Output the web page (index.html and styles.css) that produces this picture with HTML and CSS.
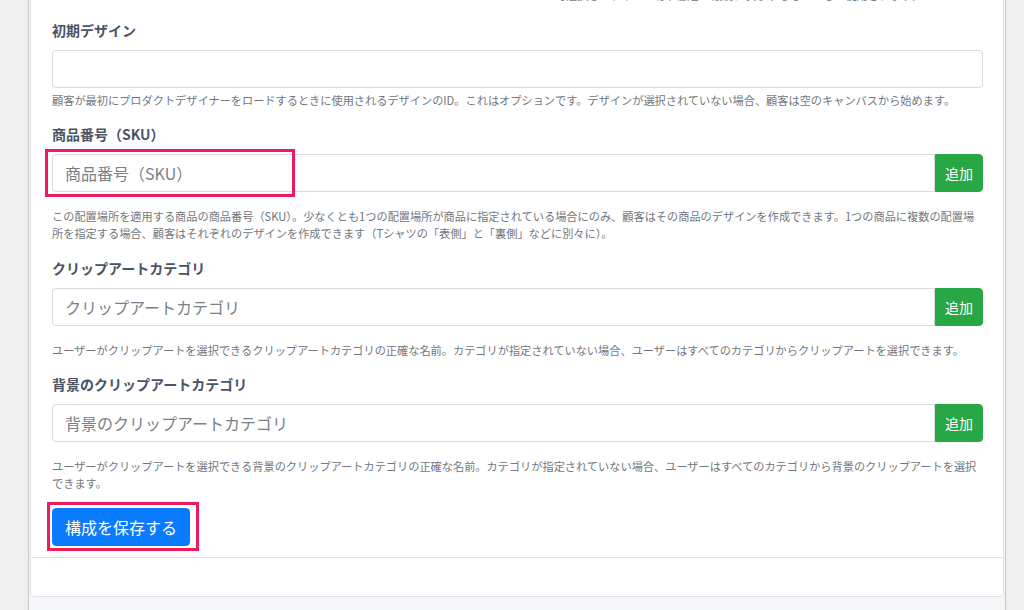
FILE: index.html
```html
<!DOCTYPE html>
<html lang="ja">
<head>
    <meta charset="UTF-8">
    <meta name="viewport" content="width=device-width, initial-scale=1.0">
    <title>構成</title>
    <link rel="stylesheet" href="styles.css">
</head>
<body>
    <div class="frame">
        <div class="card">
            <div class="card-body">
                <!-- tail of the previous row, scrolled off the top -->
                <div class="form-row">
                    <div class="col"></div>
                    <div class="col">
                        <small class="help">ここで選択したデザインは、顧客が最初に表示するものとして使用されます。</small>
                    </div>
                </div>

                <div class="form-group">
                    <label for="initialDesign">初期デザイン</label>
                    <input type="text" id="initialDesign" class="form-control">
                    <small class="help">顧客が最初にプロダクトデザイナーをロードするときに使用されるデザインのID。これはオプションです。デザインが選択されていない場合、顧客は空のキャンバスから始めます。</small>
                </div>

                <div class="form-group">
                    <label for="sku">商品番号（SKU）</label>
                    <div class="input-group">
                        <input type="text" id="sku" class="form-control" placeholder="商品番号（SKU）">
                        <button type="button" class="btn-add">追加</button>
                        <span class="mark mark-input"></span>
                    </div>
                    <small class="help">この配置場所を適用する商品の商品番号（SKU）。少なくとも1つの配置場所が商品に指定されている場合にのみ、顧客はその商品のデザインを作成できます。1つの商品に複数の配置場所を指定する場合、顧客はそれぞれのデザインを作成できます（Tシャツの「表側」と「裏側」などに別々に）。</small>
                </div>

                <div class="form-group">
                    <label for="clipart">クリップアートカテゴリ</label>
                    <div class="input-group">
                        <input type="text" id="clipart" class="form-control" placeholder="クリップアートカテゴリ">
                        <button type="button" class="btn-add">追加</button>
                    </div>
                    <small class="help">ユーザーがクリップアートを選択できるクリップアートカテゴリの正確な名前。カテゴリが指定されていない場合、ユーザーはすべてのカテゴリからクリップアートを選択できます。</small>
                </div>

                <div class="form-group">
                    <label for="bgClipart">背景のクリップアートカテゴリ</label>
                    <div class="input-group">
                        <input type="text" id="bgClipart" class="form-control" placeholder="背景のクリップアートカテゴリ">
                        <button type="button" class="btn-add">追加</button>
                    </div>
                    <small class="help">ユーザーがクリップアートを選択できる背景のクリップアートカテゴリの正確な名前。カテゴリが指定されていない場合、ユーザーはすべてのカテゴリから背景のクリップアートを選択できます。</small>
                </div>

                <div class="save-row">
                    <span class="save-wrap">
                        <button type="submit" class="btn-save">構成を保存する</button>
                        <span class="mark mark-save"></span>
                    </span>
                </div>
            </div>
            <div class="card-footer"></div>
        </div>
    </div>
</body>
</html>
```

FILE: styles.css
```css
html, body {
    margin: 0;
    padding: 0;
}
body {
    font-family: "Noto Sans CJK JP", "Noto Sans", sans-serif;
    background-color: #efefef;
    color: #4a5466;
}
.frame {
    margin: -46px 0 0 28px;
    width: 978px;
    box-sizing: border-box;
    border-left: 1px solid #c6c6c6;
    border-right: 1px solid #c6c6c6;
    background: #f6f7f9;
    padding: 0 1px 60px;
}
.card {
    background: #fff;
    border: 1px solid #dfe3e7;
    border-radius: 4px;
}
.card-body {
    padding: 20px 20px 11px 21px;
    border-bottom: 1px solid #dfe3e7;
}
.card-footer {
    height: 38px;
}
.form-row {
    display: grid;
    grid-template-columns: 1fr 1fr;
    column-gap: 30px;
    padding-top: 8px;
    margin-bottom: 15.5px;
}
.form-group {
    margin-bottom: 15.5px;
}
.form-group label {
    display: block;
    font-size: 14px;
    font-weight: 700;
    line-height: 20px;
    margin-bottom: 10px;
    color: #4a5466;
}
.form-control {
    display: block;
    width: 100%;
    height: 38px;
    box-sizing: border-box;
    padding: 6px 12px;
    font-family: inherit;
    font-size: 16px;
    color: #495057;
    background: #fff;
    border: 1px solid #d6dadf;
    border-radius: 4px;
    outline: none;
}
.form-control::placeholder {
    color: #7b8086;
}
.help {
    display: block;
    margin-top: 4px;
    font-size: 11.2px;
    line-height: 17px;
    color: #72777d;
}
.input-group {
    position: relative;
    display: flex;
    margin-bottom: 16px;
}
.input-group .form-control {
    flex: 1;
    border-radius: 4px 0 0 4px;
}
.btn-add {
    flex: none;
    height: 38px;
    padding: 0 9px;
    font-family: inherit;
    font-size: 14px;
    color: #fff;
    background: #28a745;
    border: 1px solid #28a745;
    border-radius: 0 4px 4px 0;
    cursor: pointer;
}
.save-row {
    display: flex;
}
.save-wrap {
    position: relative;
    display: inline-block;
}
.btn-save {
    display: block;
    height: 38px;
    padding: 0 12px;
    font-family: inherit;
    font-size: 16px;
    color: #fff;
    background: #0a7bff;
    border: 1px solid #0a7bff;
    border-radius: 4px;
    cursor: pointer;
}
/* red annotation boxes drawn over the screenshot */
.mark {
    position: absolute;
    border: 3px solid #ef1b5c;
    box-sizing: border-box;
    pointer-events: none;
}
.mark-input {
    left: -7px;
    top: -5px;
    width: 250px;
    height: 48px;
}
.mark-save {
    left: -5px;
    top: -6px;
    width: 152px;
    height: 49px;
}
```
